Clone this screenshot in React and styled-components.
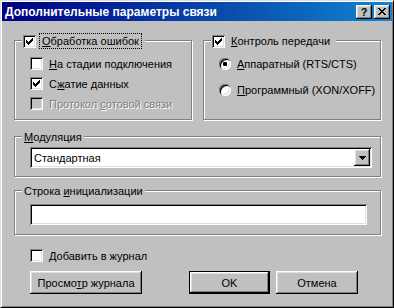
import React from 'react';
import styled, { createGlobalStyle, css } from 'styled-components';

const GlobalStyle = createGlobalStyle`
  html, body {
    margin: 0;
    padding: 0;
    background: #c0c0c0;
  }
  body {
    font-family: "Liberation Sans", Arial, sans-serif;
    font-size: 11px;
    color: #000;
  }
`;

// win98 bevels
const raised = css`
  background: #c0c0c0;
  box-shadow: inset -1px -1px #000, inset 1px 1px #fff, inset -2px -2px #808080, inset 2px 2px #dfdfdf;
`;

const sunken = css`
  box-shadow: inset 1px 1px #808080, inset -1px -1px #fff, inset 2px 2px #000, inset -2px -2px #dfdfdf;
`;

const Window = styled.div`
  box-sizing: border-box;
  width: 394px;
  height: 308px;
  display: flex;
  flex-direction: column;
  padding: 1px;
  background: #c0c0c0;
  border: 1px solid;
  border-color: #dfdfdf #000 #000 #dfdfdf;
  box-shadow: inset 1px 1px #fff, inset -1px -1px #808080;
`;

const TitleBar = styled.div`
  height: 19px;
  flex-shrink: 0;
  display: flex;
  align-items: center;
  padding: 0 2px 0 3px;
  background: linear-gradient(to right, #000080, #1084d0);
`;

const Title = styled.div`
  flex: 1;
  color: #fff;
  font-weight: bold;
  font-size: 12px;
  white-space: nowrap;
`;

const CaptionButton = styled.div`
  ${raised};
  width: 16px;
  height: 14px;
  margin-left: ${p => p.$gap || 0}px;
  display: flex;
  align-items: center;
  justify-content: center;
  font-weight: bold;
  font-size: 11px;
  line-height: 14px;
`;

const Content = styled.div`
  flex: 1;
  display: flex;
  flex-direction: column;
  padding: 19px 11px 0 12px;
`;

const TopRow = styled.div`
  display: grid;
  grid-template-columns: 178px 178px;
  column-gap: 11px;
`;

const GroupBox = styled.div`
  box-sizing: border-box;
  height: ${p => p.$h}px;
  margin-top: ${p => p.$mt || 0}px;
  display: flex;
  flex-direction: column;
  border: 1px solid #808080;
  box-shadow: inset 1px 1px #fff, 1px 1px #fff;
`;

const Legend = styled.div`
  align-self: flex-start;
  height: 16px;
  display: flex;
  align-items: center;
  margin: -8px 0 0 7px;
  padding: 0 ${p => p.$pr ?? 2}px 0 ${p => p.$pl ?? 2}px;
  background: #c0c0c0;
  white-space: nowrap;
`;

const GroupBody = styled.div`
  display: flex;
  flex-direction: column;
  align-items: flex-start;
  gap: ${p => p.$gap || 0}px;
  padding: ${p => p.$pt || 0}px 0 0 15px;
`;

const CheckRow = styled.label`
  display: flex;
  align-items: center;
  height: 13px;
  gap: 6px;
  white-space: nowrap;
  color: ${p => (p.$disabled ? '#808080' : '#000')};
  text-shadow: ${p => (p.$disabled ? '1px 1px #fff' : 'none')};
`;

const RadioRow = styled(CheckRow)`
  height: 14px;
`;

const Box = styled.span`
  ${sunken};
  flex-shrink: 0;
  box-sizing: border-box;
  width: 13px;
  height: 13px;
  display: flex;
  align-items: center;
  justify-content: center;
  background: ${p => (p.$disabled ? '#c0c0c0' : '#fff')};
`;

const Radio = styled.span`
  ${sunken};
  flex-shrink: 0;
  width: 12px;
  height: 12px;
  border-radius: 50%;
  display: flex;
  align-items: center;
  justify-content: center;
  background: #fff;
`;

const Dot = styled.span`
  width: 4px;
  height: 4px;
  border-radius: 1px;
  background: #000;
`;

const LegendText = styled.span`
  margin-left: 3px;
  padding: 0 2px;
  line-height: 14px;
  border: 1px dotted ${p => (p.$focus ? '#000' : 'transparent')};
`;

const Field = styled.div`
  ${sunken};
  box-sizing: border-box;
  width: ${p => p.$w}px;
  height: 21px;
  margin: ${p => p.$mt}px 0 0 15px;
  display: flex;
  align-items: center;
  padding: 2px 2px 2px 4px;
  background: #fff;
`;

const FieldText = styled.span`
  flex: 1;
`;

const DropButton = styled.span`
  ${raised};
  width: 16px;
  height: 17px;
  display: flex;
  align-items: center;
  justify-content: center;
`;

const LogRow = styled.div`
  margin: 14px 0 0 16px;
`;

const ButtonRow = styled.div`
  display: flex;
  margin: 9px 23px 0 16px;
`;

const Button = styled.div`
  box-sizing: border-box;
  height: 23px;
  width: ${p => p.$w}px;
  margin-left: ${p => p.$ml || '0'};
  display: flex;
  align-items: center;
  justify-content: center;
  white-space: nowrap;
  background: #c0c0c0;
  box-shadow: ${p =>
    p.$default
      ? 'inset 0 0 0 1px #000, inset -2px -2px #000, inset 2px 2px #fff, inset -3px -3px #808080, inset 3px 3px #dfdfdf'
      : 'inset -1px -1px #000, inset 1px 1px #fff, inset -2px -2px #808080, inset 2px 2px #dfdfdf'};
`;

const Check = () => (
  <svg width="7" height="7" viewBox="0 0 7 7" shapeRendering="crispEdges">
    <path
      fill="#000"
      d="M6 0h1v1h-1z M5 1h2v1h-2z M0 2h1v1h-1z M4 2h3v1h-3z M0 3h2v1h-2z M3 3h3v1h-3z M0 4h5v1h-5z M1 5h3v1h-3z M2 6h1v1h-1z"
    />
  </svg>
);

const CloseGlyph = () => (
  <svg width="8" height="7" viewBox="0 0 8 7" shapeRendering="crispEdges">
    <path
      fill="#000"
      d="M0 0h2v1h-2z M6 0h2v1h-2z M1 1h2v1h-2z M5 1h2v1h-2z M2 2h4v1h-4z M3 3h2v1h-2z M2 4h4v1h-4z M1 5h2v1h-2z M5 5h2v1h-2z M0 6h2v1h-2z M6 6h2v1h-2z"
    />
  </svg>
);

const Arrow = () => (
  <svg width="7" height="4" viewBox="0 0 7 4" shapeRendering="crispEdges">
    <path fill="#000" d="M0 0h7v1h-7z M1 1h5v1h-5z M2 2h3v1h-3z M3 3h1v1h-1z" />
  </svg>
);

const CheckItem = ({ checked, disabled, children }) => (
  <CheckRow $disabled={disabled}>
    <Box $disabled={disabled}>{checked && <Check />}</Box>
    <span>{children}</span>
  </CheckRow>
);

const RadioItem = ({ checked, children }) => (
  <RadioRow>
    <Radio>{checked && <Dot />}</Radio>
    <span>{children}</span>
  </RadioRow>
);

export default function App() {
  return (
    <>
      <GlobalStyle />
      <Window>
        <TitleBar>
          <Title>Дополнительные параметры связи</Title>
          <CaptionButton>?</CaptionButton>
          <CaptionButton $gap={2}>
            <CloseGlyph />
          </CaptionButton>
        </TitleBar>

        <Content>
          <TopRow>
            <GroupBox $h={80}>
              <Legend $pl={1} $pr={3}>
                <Box>
                  <Check />
                </Box>
                <LegendText $focus>
                  <u>О</u>бработка ошибок
                </LegendText>
              </Legend>
              <GroupBody $pt={8} $gap={7}>
                <CheckItem>
                  <u>Н</u>а стадии подключения
                </CheckItem>
                <CheckItem checked>
                  С<u>ж</u>атие данных
                </CheckItem>
                <CheckItem disabled>
                  Протокол <u>с</u>отовой связи
                </CheckItem>
              </GroupBody>
            </GroupBox>

            <GroupBox $h={80}>
              <Legend $pl={1} $pr={3}>
                <Box>
                  <Check />
                </Box>
                <LegendText>
                  <u>К</u>онтроль передачи
                </LegendText>
              </Legend>
              <GroupBody $pt={8} $gap={12}>
                <RadioItem checked>
                  <u>А</u>ппаратный (RTS/CTS)
                </RadioItem>
                <RadioItem>
                  <u>П</u>рограммный (XON/XOFF)
                </RadioItem>
              </GroupBody>
            </GroupBox>
          </TopRow>

          <GroupBox $h={41} $mt={16}>
            <Legend>
              <span>
                <u>М</u>одуляция
              </span>
            </Legend>
            <Field $w={342} $mt={2}>
              <FieldText>Стандартная</FieldText>
              <DropButton>
                <Arrow />
              </DropButton>
            </Field>
          </GroupBox>

          <GroupBox $h={45} $mt={13}>
            <Legend>
              <span>
                Строка <u>и</u>нициализации
              </span>
            </Legend>
            <Field $w={337} $mt={5} />
          </GroupBox>

          <LogRow>
            <CheckItem>
              <u>Д</u>обавить в журнал
            </CheckItem>
          </LogRow>

          <ButtonRow>
            <Button $w={112}>
              <span>
                Просмо<u>т</u>р журнала
              </span>
            </Button>
            <Button $w={81} $ml="auto" $default>
              OK
            </Button>
            <Button $w={82} $ml="6px">
              Отмена
            </Button>
          </ButtonRow>
        </Content>
      </Window>
    </>
  );
}
